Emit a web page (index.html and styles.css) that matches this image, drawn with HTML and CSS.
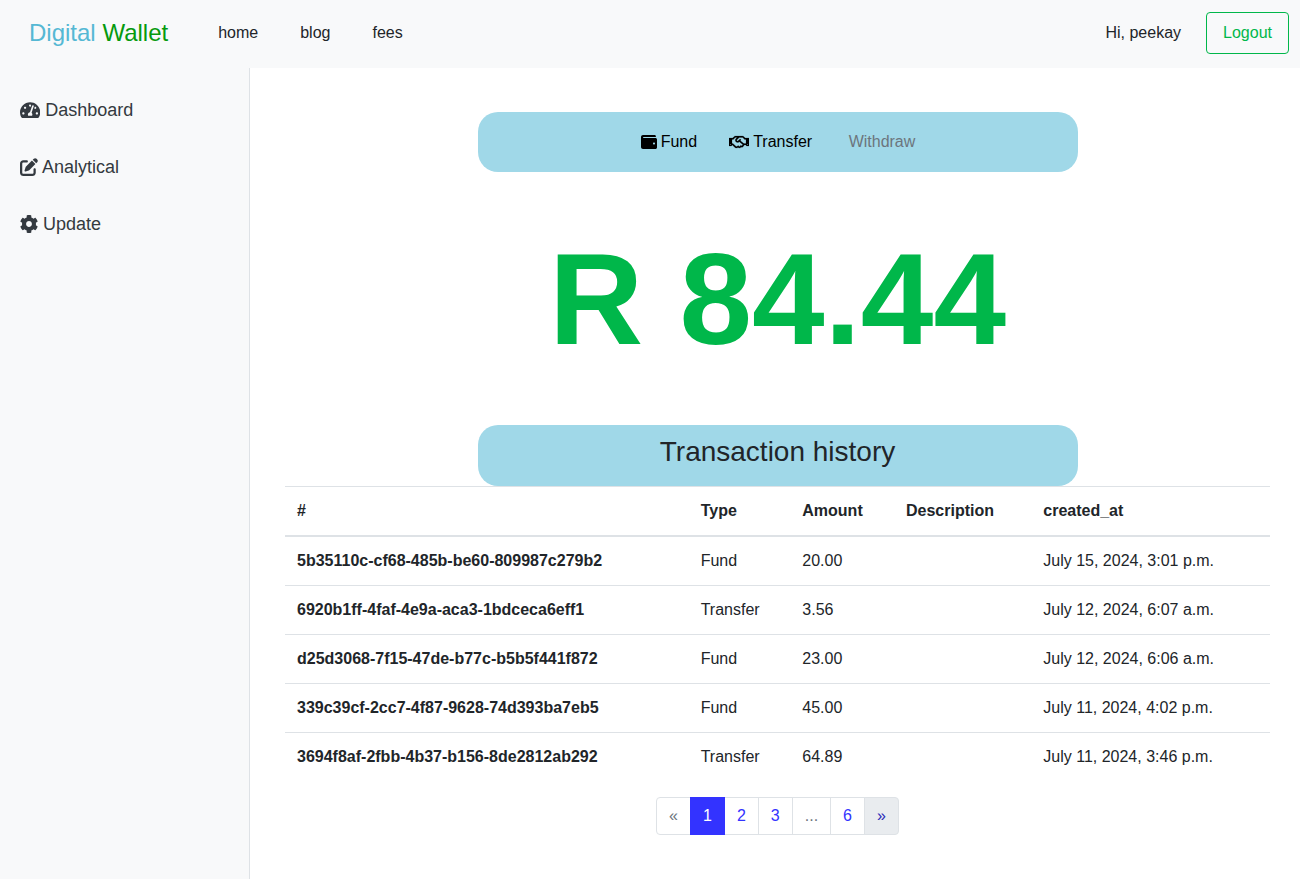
FILE: index.html
```html
<!DOCTYPE html>
<html lang="en">
<head>
    <meta charset="UTF-8">
    <meta name="viewport" content="width=device-width, initial-scale=1.0">
    <title>Digital Wallet</title>
    <link rel="stylesheet" href="styles.css">
</head>
<body>
    <header class="navbar">
        <a class="brand" href="#"><span class="brand-first">Digital</span> <span class="brand-second">Wallet</span></a>
        <nav class="nav-links">
            <a href="#">home</a>
            <a href="#">blog</a>
            <a href="#">fees</a>
        </nav>
        <div class="nav-user">
            <span>Hi, peekay</span>
            <a class="logout-btn" href="#">Logout</a>
        </div>
    </header>

    <div class="page">
        <aside class="sidebar">
            <a class="side-link" href="#">
                <svg class="icon icon-wide" viewBox="0 0 576 512"><path d="M288 32C128.94 32 0 160.94 0 320c0 52.8 14.25 102.26 39.06 144.8 5.61 9.62 16.3 15.2 27.44 15.2h443c11.14 0 21.83-5.58 27.44-15.2C561.75 422.26 576 372.8 576 320c0-159.06-128.94-288-288-288zm0 64c14.71 0 26.58 10.13 30.32 23.65-1.11 2.26-2.64 4.23-3.45 6.67l-9.22 27.67c-5.13 3.49-10.97 6.01-17.64 6.01-17.67 0-32-14.33-32-32S270.33 96 288 96zM96 384c-17.67 0-32-14.33-32-32s14.33-32 32-32 32 14.33 32 32-14.33 32-32 32zm48-160c-17.67 0-32-14.33-32-32s14.33-32 32-32 32 14.33 32 32-14.33 32-32 32zm246.77-72.41l-61.33 184C343.13 347.33 352 364.54 352 384c0 11.72-3.38 22.55-8.88 32H232.88c-5.5-9.45-8.88-20.28-8.88-32 0-33.94 26.5-61.43 59.9-63.59l61.34-184.01c4.17-12.56 17.73-19.45 30.36-15.17 12.57 4.19 19.35 17.79 15.17 30.36zm14.66 57.2l15.52-46.55c3.47-1.29 7.13-2.23 11.05-2.23 17.67 0 32 14.33 32 32s-14.33 32-32 32c-11.38-.01-20.89-6.28-26.57-15.22zM480 384c-17.67 0-32-14.33-32-32s14.33-32 32-32 32 14.33 32 32-14.33 32-32 32z"/></svg>
                Dashboard
            </a>
            <a class="side-link side-link-tight" href="#">
                <svg class="icon" viewBox="0 0 512 512"><path d="M471.6 21.7c-21.9-21.9-57.3-21.9-79.2 0L362.3 51.7l97.9 97.9 30.1-30.1c21.9-21.9 21.9-57.3 0-79.2L471.6 21.7zm-299.2 220c-6.1 6.1-10.8 13.6-13.5 21.9l-29.6 88.8c-2.9 8.6-.6 18.1 5.8 24.6s15.9 8.7 24.6 5.8l88.8-29.6c8.2-2.7 15.7-7.4 21.9-13.5L437.7 172.3 339.7 74.3 172.4 241.7zM96 64C43 64 0 107 0 160V416c0 53 43 96 96 96H352c53 0 96-43 96-96V320c0-17.7-14.3-32-32-32s-32 14.3-32 32v96c0 17.7-14.3 32-32 32H96c-17.7 0-32-14.3-32-32V160c0-17.7 14.3-32 32-32h96c17.7 0 32-14.3 32-32s-14.3-32-32-32H96z"/></svg>
                Analytical
            </a>
            <a class="side-link" href="#">
                <svg class="icon" viewBox="18 8 476 496"><path d="M487.4 315.7l-42.6-24.6c4.3-23.2 4.3-47 0-70.2l42.6-24.6c4.9-2.8 7.1-8.6 5.5-14-11.1-35.6-30-67.8-54.7-94.6-3.8-4.1-10-5.1-14.8-2.3L380.8 110c-17.9-15.4-38.5-27.3-60.8-35.1V25.8c0-5.6-3.9-10.5-9.4-11.7-36.7-8.2-74.3-7.8-109.2 0-5.5 1.2-9.4 6.1-9.4 11.7V75c-22.2 7.9-42.8 19.8-60.8 35.1L88.7 85.5c-4.9-2.8-11-1.9-14.8 2.3-24.7 26.7-43.6 58.9-54.7 94.6-1.7 5.4.6 11.2 5.5 14L67.3 221c-4.3 23.2-4.3 47 0 70.2l-42.6 24.6c-4.9 2.8-7.1 8.6-5.5 14 11.1 35.6 30 67.8 54.7 94.6 3.8 4.1 10 5.1 14.8 2.3l42.6-24.6c17.9 15.4 38.5 27.3 60.8 35.1v49.2c0 5.6 3.9 10.5 9.4 11.7 36.7 8.2 74.3 7.8 109.2 0 5.5-1.2 9.4-6.1 9.4-11.7v-49.2c22.2-7.9 42.8-19.8 60.8-35.1l42.6 24.6c4.9 2.8 11 1.9 14.8-2.3 24.7-26.7 43.6-58.9 54.7-94.6 1.5-5.5-.7-11.3-5.6-14.1zM256 336c-44.1 0-80-35.9-80-80s35.9-80 80-80 80 35.9 80 80-35.9 80-80 80z"/></svg>
                Update
            </a>
        </aside>

        <main class="content">
            <div class="actions-card">
                <a class="action" href="#">
                    <svg class="icon-sm" viewBox="0 0 512 512"><path d="M461.2 128H80c-8.84 0-16-7.16-16-16s7.16-16 16-16h384c8.84 0 16-7.16 16-16 0-26.51-21.49-48-48-48H64C28.65 32 0 60.65 0 96v320c0 35.35 28.65 64 64 64h397.2c28.02 0 50.8-21.53 50.8-48V176c0-26.47-22.78-48-50.8-48zM416 336c-17.67 0-32-14.33-32-32s14.33-32 32-32 32 14.33 32 32-14.33 32-32 32z"/></svg>
                    Fund
                </a>
                <a class="action" href="#">
                    <svg class="icon-sm icon-hand" viewBox="0 0 640 512"><path d="M519.2 127.9l-47.6-47.6A56.252 56.252 0 0 0 432 64H205.2c-14.8 0-29.1 5.9-39.6 16.3L118 127.9H0v255.7h64c17.6 0 31.8-14.2 31.9-31.7h9.1l84.6 76.4c30.9 25.1 73.8 25.7 105.6 3.8 12.5 10.8 26 15.9 41.1 15.9 18.2 0 35.3-7.4 48.8-24 22.1 8.7 48.2 2.6 64-16.8l26.2-32.3c5.6-6.9 9.1-14.8 10.9-23h57.9c.1 17.5 14.4 31.7 31.9 31.7h64V127.9H519.2zM48 351.6c-8.8 0-16-7.2-16-16s7.2-16 16-16 16 7.2 16 16c0 8.9-7.2 16-16 16zm390-6.9l-26.1 32.2c-2.8 3.4-7.8 4-11.3 1.2l-23.9-19.4-30 36.5c-6 7.3-15 4.8-18 2.4l-36.8-31.5-15.6 19.2c-13.9 17.1-39.2 19.7-55.3 6.6l-97.3-88H96V175.8h41.9l61.7-61.6c2-.8 3.7-1.5 5.7-2.3H262l-38.7 35.5c-29.4 26.9-31.1 72.3-4.4 101.3 14.8 16.2 61.2 41.2 101.5 4.4l8.2-7.5 108.2 87.8c3.4 2.8 3.9 7.9 1.2 11.3zm106-40.8h-69.2c-2.3-2.8-4.9-5.4-7.7-7.7l-102.7-83.4 12.5-11.4c6.5-6 7-16.1 1-22.6L367 167.1c-6-6.5-16.1-6.9-22.6-1l-55.2 50.6c-9.5 8.7-25.7 9.4-34.6 0-9.3-9.9-8.5-25.1 1.2-33.9l65.6-60.1c7.4-6.8 17-10.5 27-10.5l83.7-.2c2.1 0 4.1.8 5.5 2.3l61.7 61.6H544v128zm48 47.7c-8.8 0-16-7.2-16-16s7.2-16 16-16 16 7.2 16 16c0 8.9-7.2 16-16 16z"/></svg>
                    Transfer
                </a>
                <a class="action action-muted" href="#">Withdraw</a>
            </div>

            <h1 class="balance">R 84.44</h1>

            <div class="history-card">Transaction history</div>

            <table class="history">
                <thead>
                    <tr>
                        <th class="col-id">#</th>
                        <th class="col-type">Type</th>
                        <th class="col-amount">Amount</th>
                        <th class="col-desc">Description</th>
                        <th>created_at</th>
                    </tr>
                </thead>
                <tbody>
                    <tr>
                        <th>5b35110c-cf68-485b-be60-809987c279b2</th>
                        <td>Fund</td>
                        <td>20.00</td>
                        <td></td>
                        <td>July 15, 2024, 3:01 p.m.</td>
                    </tr>
                    <tr>
                        <th>6920b1ff-4faf-4e9a-aca3-1bdceca6eff1</th>
                        <td>Transfer</td>
                        <td>3.56</td>
                        <td></td>
                        <td>July 12, 2024, 6:07 a.m.</td>
                    </tr>
                    <tr>
                        <th>d25d3068-7f15-47de-b77c-b5b5f441f872</th>
                        <td>Fund</td>
                        <td>23.00</td>
                        <td></td>
                        <td>July 12, 2024, 6:06 a.m.</td>
                    </tr>
                    <tr>
                        <th>339c39cf-2cc7-4f87-9628-74d393ba7eb5</th>
                        <td>Fund</td>
                        <td>45.00</td>
                        <td></td>
                        <td>July 11, 2024, 4:02 p.m.</td>
                    </tr>
                    <tr>
                        <th>3694f8af-2fbb-4b37-b156-8de2812ab292</th>
                        <td>Transfer</td>
                        <td>64.89</td>
                        <td></td>
                        <td>July 11, 2024, 3:46 p.m.</td>
                    </tr>
                </tbody>
            </table>

            <ul class="pagination">
                <li class="page-item page-muted"><a href="#">&laquo;</a></li>
                <li class="page-item page-active"><a href="#">1</a></li>
                <li class="page-item"><a href="#">2</a></li>
                <li class="page-item"><a href="#">3</a></li>
                <li class="page-item page-muted"><a href="#">...</a></li>
                <li class="page-item"><a href="#">6</a></li>
                <li class="page-item page-hover"><a href="#">&raquo;</a></li>
            </ul>
        </main>
    </div>
</body>
</html>
```

FILE: styles.css
```css
* {
    box-sizing: border-box;
}

body {
    font-family: "Liberation Sans", Arial, sans-serif;
    font-size: 16px;
    line-height: 1.5;
    margin: 0;
    color: #212529;
    background-color: #fff;
}

a {
    text-decoration: none;
    color: inherit;
}

.navbar {
    display: flex;
    align-items: center;
    height: 68px;
    padding: 0 11px 2px 29px;
    background-color: #f8f9fa;
}

.brand {
    font-size: 24px;
    margin-right: 29px;
}

.brand-first {
    color: #55b8d4;
}

.brand-second {
    color: #069a0e;
}

.nav-links {
    display: flex;
}

.nav-links a {
    padding: 0 21px;
}

.nav-user {
    display: flex;
    align-items: center;
    gap: 25px;
    margin-left: auto;
}

.logout-btn {
    padding: 8px 16px;
    color: #00b74a;
    border: 1px solid #00b74a;
    border-radius: 4px;
}

.page {
    display: flex;
    min-height: 811px;
}

.sidebar {
    flex: none;
    width: 250px;
    padding-top: 14px;
    background-color: #f8f9fa;
    border-right: 1px solid #dee2e6;
}

.side-link {
    display: flex;
    align-items: center;
    gap: 5px;
    height: 57px;
    padding-left: 20px;
    font-size: 18px;
    color: #343a40;
}

.side-link-tight {
    gap: 4px;
}

.icon {
    width: 18px;
    height: 18px;
    margin-bottom: 2px;
    fill: #343a40;
}

.icon-wide {
    width: 20.25px;
}

.content {
    flex: 1;
    padding: 44px 30px 0 35px;
}

.actions-card {
    display: flex;
    justify-content: center;
    align-items: center;
    gap: 32px;
    width: 600px;
    height: 60px;
    margin: 0 auto;
    padding-left: 1px;
    background-color: #a0d8e8;
    border-radius: 20px;
}

.action {
    display: flex;
    align-items: center;
    gap: 4px;
    color: #000;
}

.action-muted {
    margin-left: 4.5px;
    color: #6c757d;
}

.icon-sm {
    width: 16px;
    height: 16px;
    fill: #000;
}

.icon-hand {
    width: 20px;
    stroke: #000;
    stroke-width: 6px;
}

.balance {
    margin: 0;
    height: 253px;
    padding-top: 52px;
    font-size: 130.5px;
    line-height: 150px;
    font-weight: 700;
    text-align: center;
    color: #00b74a;
}

.history-card {
    width: 600px;
    height: 61px;
    margin: 0 auto;
    padding-top: 6px;
    font-size: 28px;
    line-height: 42px;
    text-align: center;
    background-color: #a0d8e8;
    border-radius: 20px;
}

.history {
    width: 100%;
    border-collapse: collapse;
    table-layout: fixed;
}

.history th,
.history td {
    height: 49px;
    padding: 12px;
    text-align: left;
    vertical-align: top;
    border-top: 1px solid #dee2e6;
}

.history thead th {
    height: 49px;
    border-bottom: 2px solid #dee2e6;
}

.col-id {
    width: 403.7px;
}

.col-type {
    width: 101.6px;
}

.col-amount {
    width: 103.7px;
}

.col-desc {
    width: 137.3px;
}

.pagination {
    display: flex;
    justify-content: center;
    margin: 15px 0 0;
    padding: 0;
    list-style: none;
}

.page-item a {
    display: block;
    padding: 6px 12px;
    color: #3333ff;
    background-color: #fff;
    border: 1px solid #dee2e6;
    margin-left: -1px;
}

.page-item:first-child a {
    margin-left: 0;
    border-radius: 4px 0 0 4px;
}

.page-item:last-child a {
    border-radius: 0 4px 4px 0;
}

.page-muted a {
    color: #6c757d;
}

.page-active {
    z-index: 1;
}

.page-active a {
    color: #fff;
    background-color: #3333ff;
    border-color: #3333ff;
}

.page-hover a {
    color: #2a2ab8;
    background-color: #e9ecef;
}
```
